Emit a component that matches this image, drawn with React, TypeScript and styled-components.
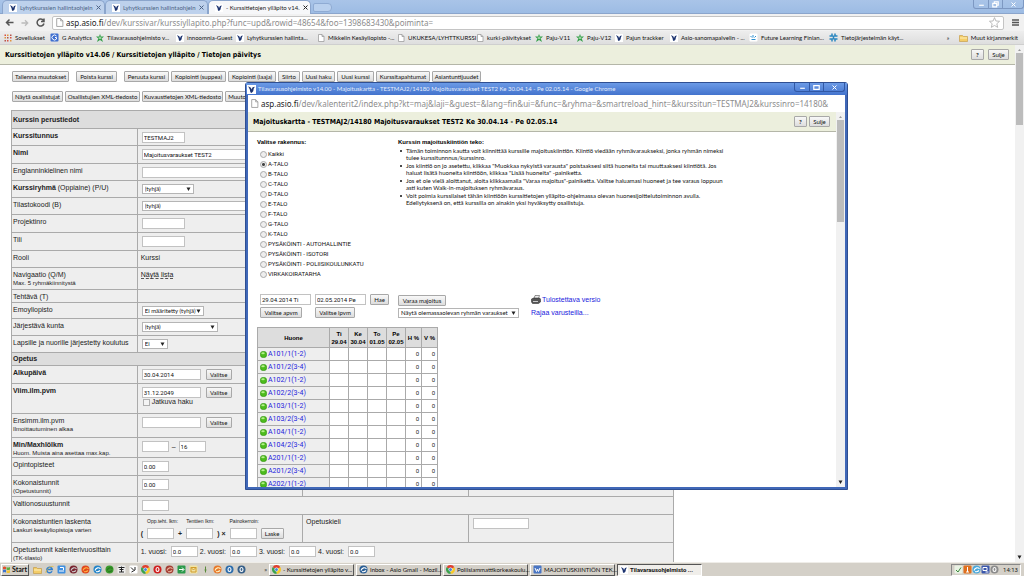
import React, { useId } from "react";
import styled, { createGlobalStyle, css } from "styled-components";

const narrow = `Roboto, "Liberation Sans", Arial, sans-serif`;
const compact = `Lato, "Liberation Sans", Arial, sans-serif`;
const sans = `"Liberation Sans", Arial, sans-serif`;
const title = `"DejaVu Sans Condensed", "DejaVu Sans", Verdana, sans-serif`;
const address = `"Noto Sans", Tahoma, sans-serif`;

const GlobalStyle = createGlobalStyle`
  *, *::before, *::after { box-sizing: border-box; }
  body { margin: 0; font: 7px/8px ${sans}; color: #222; background: #fff; }
  button, input, select { font: 6px/8px ${narrow}; color: #111; margin: 0; }
  svg { flex: none; }
`;

/* ---------- shell ---------- */

const Desktop = styled.div`
  position: relative;
  display: flex;
  flex-direction: column;
  height: 100vh;
  overflow: hidden;
`;

const TabStrip = styled.div`
  display: flex;
  flex: none;
  height: 14px;
  padding-left: 2px;
  background: linear-gradient(#a9c4e8, #9dbce4);
  border-bottom: 1px solid #8ba5cc;
`;

const Tab = styled.div<{ $active?: boolean }>`
  display: flex;
  align-items: center;
  gap: 3px;
  width: 103px;
  height: 14px;
  padding: 0 5px 0 6px;
  font: 6px/8px ${compact};
  color: ${(p) => (p.$active ? "#222" : "#4c6386")};
  background: ${(p) => (p.$active ? "#f6f7f9" : "#bdd1ec")};
  border: 1px solid #8ba5cc;
  border-bottom: 0;
  border-radius: 5px 5px 0 0;
`;

const TabTitle = styled.span`
  flex: 1;
  white-space: nowrap;
`;

const BareButton = styled.button`
  display: inline-flex;
  align-items: center;
  justify-content: center;
  flex: none;
  padding: 0;
  border: 0;
  background: none;
  color: inherit;
  &:disabled { color: #bbb; }
`;

const NewTab = styled(BareButton)`
  width: 19px;
  height: 9px;
  margin: 3px 0 0 2px;
  background: #b9d0ee;
  border: 1px solid #8fabd3;
  border-radius: 2px 4px 4px 2px;
`;

const WindowButtons = styled.div`
  display: flex;
  flex: none;
  height: 9px;
  margin-left: auto;
  border: 1px solid #7d98c2;
  border-top: 0;
  border-radius: 0 0 3px 3px;
  color: #fff;
`;

const WindowButton = styled(BareButton)<{ $wide?: boolean }>`
  width: ${(p) => (p.$wide ? 21 : 14)}px;
  & + & { border-left: 1px solid #7d98c2; }
`;

const Toolbar = styled.div`
  display: flex;
  align-items: center;
  flex: none;
  height: 17px;
  padding: 0 4px 0 5px;
  gap: 7px;
  background: #f1f1f1;
  color: #555;
`;

const AddressBox = styled.div`
  display: flex;
  align-items: center;
  gap: 2px;
  flex: 1;
  min-width: 0;
  height: 14px;
  padding: 0 3px 0 2px;
  background: #fff;
  border: 1px solid #c4c4c4;
  border-radius: 2px;
`;

const Address = styled.div`
  flex: 1;
  overflow: hidden;
  white-space: nowrap;
  font: 8px/12px ${address};
  color: #8c8c8c;
  b { font-weight: 400; color: #222; }
`;

const Bookmarks = styled.nav`
  display: flex;
  align-items: center;
  flex: none;
  height: 14px;
  padding: 0 6px 0 4px;
  background: linear-gradient(#ededed, #dedede);
  border-bottom: 1px solid #cfcfcf;
`;

const Bookmark = styled.a<{ $w?: number }>`
  display: flex;
  align-items: center;
  gap: 3px;
  flex: none;
  width: ${(p) => (p.$w ? `${p.$w}px` : "auto")};
  font: 6px/8px ${compact};
  white-space: nowrap;
  color: #111;
  text-decoration: none;
`;

const Spacer = styled.div`flex: 1;`;

const Viewport = styled.div`
  display: flex;
  flex: 1;
  min-height: 0;
`;

const Page = styled.main`
  flex: 1;
  min-width: 0;
  overflow: hidden;
`;

const PageHeader = styled.header<{ $popup?: boolean }>`
  display: flex;
  align-items: center;
  gap: ${(p) => (p.$popup ? 2 : 4)}px;
  height: 20px;
  padding: 0 6px 0 5px;
  background: #ecefdd;
  border-bottom: 1px solid #b4b6a8;
`;

const Title = styled.h1`
  flex: 1;
  margin: 0;
  font: bold 7px/10px ${title};
  white-space: nowrap;
  color: #000;
`;

const Button = styled.button<{ $w?: number }>`
  flex: none;
  width: ${(p) => (p.$w ? `${p.$w}px` : "auto")};
  height: 11px;
  padding: 0;
  font: 6px/9px ${compact};
  text-align: center;
  white-space: nowrap;
  background: linear-gradient(#f8f8f8, #dddddd);
  border: 1px solid #a8a8a8;
  border-radius: 1px;
`;

const Scrollbar = styled.div`
  display: flex;
  flex-direction: column;
  align-items: center;
  flex: none;
  width: 9px;
  padding: 3px 0;
  background: #f1f1f1;
  color: #444;
`;

const Thumb = styled.div<{ $h: number }>`
  width: 7px;
  height: ${(p) => p.$h}px;
  margin: 1px 0 auto;
  background: #bcbcbc;
`;

/* ---------- course form ---------- */

const Actions = styled.div`
  display: flex;
  gap: 2px;
  padding: 6px 0 9px 12px;
  & + & { padding: 0 0 8px 12px; }
`;

const Sep = styled.span`width: 3px;`;

const FormArea = styled.form`
  padding-left: 11px;
`;

const FormTable = styled.table`
  width: 66%;
  table-layout: fixed;
  border-collapse: collapse;
  background: #eee;
  th, td {
    padding: 3px 3px 0;
    border: 1px solid #aaa;
    text-align: left;
    vertical-align: top;
    font-weight: 400;
    white-space: nowrap;
  }
  th { padding-left: 1px; }
  td + th { padding-left: 3px; }
`;

const Row = styled.tr<{ $h: number; $head?: boolean }>`
  height: ${(p) => p.$h}px;
  ${(p) => p.$head && css`
    background: #ddd;
    && th { font-weight: 700; vertical-align: middle; padding-top: 0; }
  `}
`;

const Note = styled.div`
  font: 6px/8px ${sans};
`;

const Line = styled.div<{ $gap?: number; $pad?: number }>`
  display: flex;
  align-items: center;
  gap: ${(p) => p.$gap ?? 5}px;
  padding-left: ${(p) => p.$pad ?? 1}px;
`;

const TextInput = styled.input<{ $w: number }>`
  flex: none;
  width: ${(p) => p.$w}px;
  height: 11px;
  padding: 0 1px;
  background: #fff;
  border: 1px solid #c2c2c2;
  border-radius: 0;
`;

const SelectWrap = styled.span<{ $w: number }>`
  position: relative;
  display: block;
  flex: none;
  width: ${(p) => p.$w}px;
  height: 10px;
  select {
    display: block;
    width: 100%;
    height: 10px;
    padding: 0 2px;
    font-family: ${compact};
    appearance: none;
    background: #fff;
    border: 1px solid #b5b5b5;
    border-radius: 0;
  }
  svg { position: absolute; right: 3px; top: 3px; pointer-events: none; }
`;

const Small = styled.label`
  display: flex;
  flex-direction: column;
  gap: 3px;
  width: 27px;
  font: 5px/7px ${sans};
`;

const Calc = styled.div`
  display: flex;
  align-items: flex-end;
  gap: 4px;
  b { line-height: 10px; }
`;

const Tick = styled.input`
  appearance: none;
  width: 7px;
  height: 7px;
  background: #f4f4f4;
  border: 1px solid #b0b0b0;
`;

const DottedLink = styled.a`
  color: #222;
  text-decoration: none;
  border-bottom: 1px dashed #555;
`;

/* ---------- popup window ---------- */

const Popup = styled.section`
  position: absolute;
  left: 245px;
  top: 82px;
  display: flex;
  flex-direction: column;
  width: 603px;
  height: 408px;
  padding: 0 2px 2px;
  background: #4068b8;
  border: 1px solid #2f4f92;
  border-radius: 3px 3px 0 0;
`;

const PopupBar = styled.div`
  display: flex;
  align-items: center;
  gap: 2px;
  flex: none;
  height: 12px;
  margin: 0 -2px;
  padding: 0 2px 0 1px;
  font: 6px/8px ${compact};
  color: #e6eefc;
  white-space: nowrap;
  background: linear-gradient(#6b9ae6, #4373cd);
  ${WindowButtons} { align-self: flex-start; border-color: #3158a5; }
  ${WindowButton} { border-color: #3158a5; }
`;

const PopupAddress = styled.div`
  display: flex;
  align-items: center;
  gap: 2px;
  flex: none;
  height: 17px;
  padding: 0 2px;
  background: #fff;
`;

const PopupBody = styled.div`
  display: flex;
  flex: 1;
  min-height: 0;
  background: #fff;
`;

const Columns = styled.div`
  display: grid;
  grid-template-columns: 141px 1fr;
  padding: 6px 0 0 9px;
`;

const Heading = styled.h2`
  margin: 0 0 1px;
  font: bold 6px/8px ${sans};
  color: #000;
`;

const Radios = styled.fieldset`
  margin: 0;
  padding: 0;
  border: 0;
  font: 6px/10px ${narrow};
  color: #111;
  legend { padding: 0; margin-bottom: 3px; font: bold 6px/8px ${sans}; color: #000; }
  label { display: flex; align-items: center; gap: 1px; height: 10px; padding-left: 3px; white-space: nowrap; }
`;

const Radio = styled.input`
  appearance: none;
  width: 7px;
  height: 7px;
  background: #eee;
  border: 1px solid #a9a9a9;
  border-radius: 50%;
  &:checked { background: radial-gradient(#444 0 1px, #eee 2px); }
`;

const Help = styled.ul`
  margin: 0;
  padding: 0 0 0 8px;
  list-style: none;
  font: 6px/7px ${compact};
  color: #111;
  white-space: nowrap;
  li { position: relative; margin-bottom: 1px; }
  li::before {
    content: "";
    position: absolute;
    left: -6px;
    top: 3px;
    width: 2px;
    height: 2px;
    border-radius: 50%;
    background: #111;
  }
`;

const Filters = styled.div`
  display: flex;
  align-items: flex-end;
  padding: 15px 0 0 12px;
`;

const Stack = styled.div<{ $w: number }>`
  display: flex;
  flex-direction: column;
  align-items: flex-start;
  gap: 2px;
  flex: none;
  width: ${(p) => p.$w}px;
`;

const TopStack = styled(Stack)`
  align-self: flex-start;
`;

const LinkStack = styled(Stack)`
  align-self: flex-end;
  padding-left: 1px;
`;

const BlueLink = styled.a<{ $room?: boolean }>`
  display: flex;
  align-items: center;
  gap: 1px;
  height: 11px;
  font: 7px/11px ${(p) => (p.$room ? narrow : sans)};
  color: #2222dd;
  text-decoration: none;
  white-space: nowrap;
`;

const RoomTable = styled.table`
  margin: 9px 0 0 9px;
  width: 180px;
  table-layout: fixed;
  border-collapse: collapse;
  th, td { padding: 0; border: 1px solid #aaa; }
  thead th { height: 20px; background: #ddd; font: bold 6px/8px ${sans}; color: #000; }
  tbody tr { height: 13px; }
  tbody th { padding-left: 2px; background: #eee; font-weight: 400; }
  td { padding-right: 2px; text-align: right; font: 6px/8px ${narrow}; }
`;

/* ---------- taskbar ---------- */

const Taskbar = styled.footer`
  display: flex;
  align-items: center;
  gap: 2px;
  flex: none;
  height: 14px;
  padding: 0 3px 0 1px;
  background: #d4d0c8;
  border-top: 1px solid #efede8;
  font: 6px/8px ${narrow};
`;

const StartButton = styled.button`
  display: flex;
  align-items: center;
  gap: 1px;
  flex: none;
  width: 28px;
  height: 12px;
  padding: 0;
  font: bold 7px/9px ${compact};
  background: #d4d0c8;
  border: 1px solid;
  border-color: #fff #555 #555 #fff;
`;

const QuickLaunch = styled.div`
  display: flex;
  align-items: center;
  flex: none;
  gap: 3px;
  width: 236px;
  padding-left: 2px;
`;

const Task = styled.button<{ $active?: boolean }>`
  display: flex;
  align-items: center;
  gap: 2px;
  flex: none;
  width: 85px;
  height: 12px;
  padding: 0 2px;
  white-space: nowrap;
  font: ${(p) => (p.$active ? "bold " : "")}6px/9px ${(p) => (p.$active ? narrow : compact)};
  background: ${(p) => (p.$active ? "#f0eeea" : "#d4d0c8")};
  border: 1px solid;
  border-color: ${(p) => (p.$active ? "#555 #fff #fff #555" : "#fff #555 #555 #fff")};
`;

const Tray = styled.div`
  display: flex;
  align-items: center;
  height: 12px;
  margin-left: auto;
  padding: 0 2px;
  border: 1px solid;
  border-color: #888 #fff #fff #888;
  span { margin-left: 4px; }
`;

/* ---------- icons ---------- */

const Bird = ({ s = 8 }: { s?: number }) => (
  <svg width={s} height={s} viewBox="0 0 16 16">
    <rect width="16" height="16" fill="#fff" />
    <path d="M2 2l5 3 1 3 2-4 4-1-2 3-1 5-3 3-2-1-1-5z" fill="#1d3470" />
  </svg>
);

const PageIcon = ({ s = 8 }: { s?: number }) => (
  <svg width={s} height={s} viewBox="0 0 16 16" fill="#fff" stroke="#999" strokeWidth="1.5">
    <path d="M3 1h7l4 4v10H3zM10 1v4h4" />
  </svg>
);

const Cross = ({ s = 5 }: { s?: number }) => (
  <svg width={s} height={s} viewBox="0 0 10 10" stroke="currentColor" strokeWidth="2">
    <path d="M1 1l8 8M9 1L1 9" />
  </svg>
);

const Star = ({ color = "#36a04a" }: { color?: string }) => (
  <svg width="8" height="8" viewBox="0 0 16 16">
    <path d="M8 0l2 5h6l-4.500 4L14 16l-6-4-6 4 2.500-7L0 5h6z" fill={color} />
    <path d="M8 5v5M5 8h6" stroke="#d5efd8" strokeWidth="1.500" />
  </svg>
);

const OutlineStar = () => (
  <svg width="11" height="11" viewBox="0 0 18 18" fill="#fff" stroke="#aaa" strokeWidth="1.300">
    <path d="M9 1l2.300 5.500 6 .5-4.500 4 1.400 6L9 13.800 3.800 17l1.400-6-4.500-4 6-.5z" />
  </svg>
);

const Triangle = ({ up }: { up?: boolean }) => (
  <svg width="5" height="4" viewBox="0 0 10 8">
    <path d={up ? "M5 2l3 4H2z" : "M1 1h8L5 8z"} fill={up ? "#999" : "#222"} />
  </svg>
);

const Chrome = () => (
  <svg width="9" height="9" viewBox="0 0 18 18">
    <path d="M9 9L1.200 4.500A9 9 0 0 1 16.800 4.500z" fill="#e0402f" />
    <path d="M9 9l7.800-4.500A9 9 0 0 1 9 18z" fill="#f8c928" />
    <path d="M9 9v9A9 9 0 0 1 1.200 4.500z" fill="#3aa24c" />
    <circle cx="9" cy="9" r="4" fill="#fff" />
    <circle cx="9" cy="9" r="3" fill="#4a83d8" />
  </svg>
);

const Folder = () => (
  <svg width="9" height="8" viewBox="0 0 18 16">
    <path d="M1 3h6l2 2h8v10H1z" fill="#f4cd68" stroke="#b8892b" />
    <path d="M2 8h14" stroke="#fff0b8" strokeWidth="2" />
  </svg>
);

const Apps = () => (
  <svg width="8" height="8" viewBox="0 0 16 16">
    <path d="M1 1h3v3H1zM12 6h3v3h-3zM6 12h3v3H6z" fill="#d9503c" />
    <path d="M6 1h3v3H6zM1 6h3v3H1zM12 12h3v3h-3z" fill="#e0913a" />
    <path d="M12 1h3v3h-3zM6 6h3v3H6zM1 12h3v3H1z" fill="#b5534a" />
  </svg>
);

const Orb = ({ fill, ring = "#fff", mark }: { fill: string; ring?: string; mark?: string }) => (
  <svg width="9" height="9" viewBox="0 0 18 18">
    <circle cx="9" cy="9" r="8" fill={fill} />
    <path d={mark ?? "M4 11c2-6 8-7 11-3M6 13c3 1 6 0 8-2"} fill="none" stroke={ring} strokeWidth="2.200" />
  </svg>
);

const Tile = ({ fill, ink = "#fff", mark }: { fill: string; ink?: string; mark?: string }) => (
  <svg width="9" height="9" viewBox="0 0 18 18">
    <rect x="1" y="1" width="16" height="16" rx="2" fill={fill} />
    <path d={mark ?? "M4 6l3 7 2-5 2 5 3-7"} fill="none" stroke={ink} strokeWidth="2" />
  </svg>
);

const Puzzle = () => (
  <svg width="9" height="9" viewBox="0 0 18 18" fill="none" stroke="#2a86c0" strokeWidth="3">
    <path d="M6 1v5H1M12 1v5h5M6 17v-5H1M12 17v-5h5M9 5v8" />
  </svg>
);

const Explorer = () => (
  <svg width="9" height="9" viewBox="0 0 18 18" fill="none">
    <path d="M14 12.500A5.500 5.500 0 1 1 14.500 9H5" stroke="#2f7fd0" strokeWidth="3" />
    <path d="M2 16C0 12 10 1 17 3" stroke="#e3b93a" strokeWidth="1.500" />
  </svg>
);

const WindowsFlag = () => (
  <svg width="9" height="9" viewBox="0 0 18 18">
    <path d="M2 4q3-2 6 0v5q-3-2-6 0z" fill="#e2502e" />
    <path d="M9 4q3 2 7 0v5q-4 2-7 0z" fill="#5cae3e" />
    <path d="M2 10q3-2 6 0v5q-3-2-6 0z" fill="#3b72cf" />
    <path d="M9 10q3 2 7 0v5q-4 2-7 0z" fill="#f0c132" />
  </svg>
);

const Printer = () => (
  <svg width="10" height="9" viewBox="0 0 20 18">
    <path d="M6 7l2-6h9l-2 6z" fill="#eee" stroke="#333" />
    <path d="M1 8l4-2h12l2 2v6l-4 3H3l-2-3z" fill="#555" stroke="#222" />
    <path d="M4 13h10" stroke="#ccc" strokeWidth="2" />
  </svg>
);

const GreenBall = () => (
  <svg width="7" height="7" viewBox="0 0 14 14">
    <circle cx="7" cy="7" r="6.500" fill="#4dbb1d" stroke="#2f8a10" />
    <ellipse cx="6" cy="4.500" rx="3.500" ry="2.200" fill="#b3ef8a" />
  </svg>
);

const Glyph = ({ d, s = 9 }: { d: string; s?: number }) => (
  <svg width={s} height={s} viewBox="0 0 18 18" fill="none" stroke="currentColor" strokeWidth="3">
    <path d={d} />
  </svg>
);

const Controls = ({ maximise }: { maximise?: boolean }) => (
  <WindowButtons>
    <WindowButton aria-label="Pienennä"><Glyph s={7} d="M3 11h12" /></WindowButton>
    <WindowButton aria-label="Koko">
      <Glyph s={7} d={maximise ? "M2 4h14v10H2z" : "M2 6h10v9H2zM6 5V2h10v9h-3"} />
    </WindowButton>
    <WindowButton $wide aria-label="Sulje ikkuna"><Cross /></WindowButton>
  </WindowButtons>
);

/* ---------- form parts ---------- */

const Select = ({ w, value, id, label }: { w: number; value: string; id?: string; label?: string }) => (
  <SelectWrap $w={w}>
    <select id={id} aria-label={label}><option>{value}</option></select>
    <Triangle />
  </SelectWrap>
);

interface FieldProps {
  h: number;
  label: string;
  bold?: boolean;
  extra?: string;
  note?: string;
  span?: number;
  after?: React.ReactNode;
  children?: (id: string) => React.ReactNode;
}

const Field = ({ h, label, bold, extra, note, span = 3, after, children }: FieldProps) => {
  const id = useId();
  return (
    <Row $h={h}>
      <th scope="row">
        <label htmlFor={id}>{bold ? <b>{label}</b> : label}{extra}</label>
        {note && <Note>{note}</Note>}
      </th>
      <td colSpan={span}>{children?.(id)}</td>
      {after}
    </Row>
  );
};

const input = (w: number, value = "") => (id: string) => (
  <Line><TextInput id={id} $w={w} defaultValue={value} /></Line>
);

const dateInput = (value = "") => (id: string) => (
  <Line>
    <TextInput id={id} $w={59} defaultValue={value} />
    <Button type="button" $w={26}>Valitse</Button>
  </Line>
);

const CourseForm = () => (
  <FormTable>
    <colgroup>
      <col style={{ width: "19%" }} /><col style={{ width: "25%" }} />
      <col style={{ width: "25%" }} /><col style={{ width: "31%" }} />
    </colgroup>
    <tbody>
      <Row $h={18} $head><th colSpan={4}>Kurssin perustiedot</th></Row>
      <Field h={17} label="Kurssitunnus" bold>{input(43, "TESTMAJ2")}</Field>
      <Field h={18} label="Nimi" bold>{input(200, "Majoitusvaraukset TEST2")}</Field>
      <Field h={17} label="Englanninkielinen nimi">{input(200)}</Field>
      <Field h={17} label="Kurssiryhmä" bold extra=" (Oppiaine) (P/U)">
        {(id) => <Line><Select id={id} w={52} value="(tyhjä)" /></Line>}
      </Field>
      <Field h={17} label="Tilastokoodi (B)">
        {(id) => <Line><Select id={id} w={200} value="(tyhjä)" /></Line>}
      </Field>
      <Field h={18} label="Projektinro">{input(43)}</Field>
      <Field h={18} label="Tili">{input(43)}</Field>
      <Field h={17} label="Rooli">{(id) => <output id={id}>Kurssi</output>}</Field>
      <Field h={22} label="Navigaatio (Q/M)" note="Max. 5 ryhmäkiinnitystä">
        {() => <DottedLink href="#lista">Näytä lista</DottedLink>}
      </Field>
      <Field h={13} label="Tehtävä (T)" />
      <Field h={16} label="Emoyliopisto">
        {(id) => <Line><Select id={id} w={62} value="Ei määritetty (tyhjä)" /></Line>}
      </Field>
      <Field h={17} label="Järjestävä kunta">
        {(id) => <Line><Select id={id} w={76} value="(tyhjä)" /></Line>}
      </Field>
      <Field h={17} label="Lapsille ja nuorille järjestetty koulutus">
        {(id) => <Line><Select id={id} w={26} value="Ei" /></Line>}
      </Field>
      <Row $h={13} $head><th colSpan={4}>Opetus</th></Row>
      <Field h={18} label="Alkupäivä" bold>{dateInput("30.04.2014")}</Field>
      <Field h={30} label="Viim.ilm.pvm" bold>
        {(id) => (
          <>
            {dateInput("31.12.2049")(id)}
            <label><Line $gap={2} $pad={2}><Tick type="checkbox" />Jatkuva haku</Line></label>
          </>
        )}
      </Field>
      <Field h={24} label="Ensimm.ilm.pvm" note="Ilmoittautuminen alkaa">{dateInput()}</Field>
      <Field h={20} label="Min/Maxhlölkm" bold note="Huom. Muista aina asettaa max.kap.">
        {(id) => (
          <Line $gap={3}>
            <TextInput id={id} $w={27} /> –
            <TextInput aria-label="Maksimi" $w={27} defaultValue="16" />
          </Line>
        )}
      </Field>
      <Field h={18} label="Opintopisteet">{input(27, "0.00")}</Field>
      <Field h={21} span={1} label="Kokonaistunnit" note="(Opetustunnit)" after={<><td /><td /></>}>
        {input(27, "0.00")}
      </Field>
      <Field h={18} label="Valtionosuustunnit">{input(27)}</Field>
      <Field
        h={28}
        span={1}
        label="Kokonaistuntien laskenta"
        note="Laskuri kesäyliopistoja varten"
        after={
          <>
            <th scope="row"><label htmlFor="kieli">Opetuskieli</label></th>
            <td><Line><TextInput id="kieli" $w={56} /></Line></td>
          </>
        }
      >
        {(id) => (
          <Calc>
            <b>(</b>
            <Small>Opp.teht. lkm:<TextInput id={id} $w={27} /></Small>
            <b>+</b>
            <Small>Tenttien lkm:<TextInput $w={27} /></Small>
            <b>) ×</b>
            <Small>Painokerroin:<TextInput $w={27} /></Small>
            <Button type="button" $w={23}>Laske</Button>
          </Calc>
        )}
      </Field>
      <Field h={22} label="Opetustunnit kalenterivuosittain" note="(TK-tilasto)">
        {(id) => (
          <Line $gap={2} $pad={0}>
            {[1, 2, 3, 4].map((n) => (
              <label key={n}>
                <Line $gap={4} $pad={0}>{n}. vuosi: <TextInput id={n === 1 ? id : undefined} $w={27} defaultValue="0.0" /></Line>
              </label>
            ))}
          </Line>
        )}
      </Field>
    </tbody>
  </FormTable>
);

/* ---------- data ---------- */

const buildings = [
  "Kaikki", "A-TALO", "B-TALO", "C-TALO", "D-TALO", "E-TALO", "F-TALO", "G-TALO", "K-TALO",
  "PYSÄKÖINTI - AUTOHALLINTIE", "PYSÄKÖINTI - ISOTORI", "PYSÄKÖINTI - POLIISIKOULUNKATU", "VIRKAKOIRATARHA",
];

const rooms = [
  "A101/1(1-2)", "A101/2(3-4)", "A102/1(1-2)", "A102/2(3-4)", "A103/1(1-2)", "A103/2(3-4)",
  "A104/1(1-2)", "A104/2(3-4)", "A201/1(1-2)", "A201/2(3-4)", "A202/1(1-2)",
];

const days = [["Ti", "29.04"], ["Ke", "30.04"], ["To", "01.05"], ["Pe", "02.05"]];

const bookmarks: { text: string; w: number; icon: React.ReactNode }[] = [
  { text: "Sovellukset", w: 46, icon: <Apps /> },
  { text: "G Analytics", w: 46, icon: <Tile fill="#3f6fd0" mark="M13 6a5 5 0 1 0 0 6V9h-3" /> },
  { text: "Tilavarausohjelmisto v...", w: 80, icon: <Star /> },
  { text: "innoomnia-Guest", w: 60, icon: <Bird /> },
  { text: "Lyhytkurssien hallinta...", w: 81, icon: <Bird /> },
  { text: "Mikkelin Kesäyliopisto -...", w: 80, icon: <PageIcon /> },
  { text: "UKUKESA/LYHTTKURSSI", w: 79, icon: <PageIcon /> },
  { text: "kurki-päivitykset", w: 59, icon: <PageIcon /> },
  { text: "Paju-V11", w: 41, icon: <Star /> },
  { text: "Paju-V12", w: 39, icon: <Star /> },
  { text: "Pajun trackker", w: 55, icon: <Bird /> },
  { text: "Asio-sanomapalvelin - ...", w: 79, icon: <Bird /> },
  { text: "Future Learning Finlan...", w: 80, icon: <Tile fill="#fff" ink="#2a8fd0" mark="M3 6l3 3M8 4v5M14 6l-3 3M5 13h8" /> },
  { text: "Tietojärjestelmän käyt...", w: 80, icon: <Puzzle /> },
];

const quick = [
  <Folder />, <Explorer />, <Tile fill="#3f8fe0" mark="M4 12h10M6 5h7v5" />,
  <Orb fill="#7a2530" ring="#ccc" />, <Orb fill="#e0461e" ring="#ffb340" />, <Orb fill="#2385c9" />,
  <Orb fill="#3a9a2c" ring="#2c7a20" />, <Tile fill="#eee" ink="#222" mark="M3 5h12M5 9h8M4 14h10M9 3v11" />,
  <Tile fill="#fff" ink="#222" mark="M4 5l5 5M12 4v6l-7 4" />, <Chrome />,
  <Orb fill="#cf1f1f" mark="M9 5c-4 0-4 8 0 8s4-8 0-8" />, <Orb fill="#a33d33" ring="#e9b39b" />,
  <Tile fill="#2a9a4a" mark="M4 9h9M10 5l4 4-4 4" />, <Tile fill="#f1e3a3" ink="#d09b2c" mark="M4 5h10v9H4zM4 5l5 5 5-5" />,
  <Tile fill="#d4d0c8" ink="#5a8a3a" mark="M9 3v12M7 10h4" />, <Orb fill="#e8782a" ring="#fff2c0" />,
  <Orb fill="#2c6cab" mark="M9 5c-4 0-4 8 0 8s4-8 0-8" />, <Orb fill="#365f88" mark="M9 5c-4 0-4 8 0 8s4-8 0-8" />,
];

const BookingWindow = () => (
  <Popup>
    <PopupBar>
      <Bird s={9} />
      Tilavarausohjelmisto v14.00 - Majoituskartta - TESTMAJ2/14180 Majoitusvaraukset TEST2 Ke 30.04.14 - Pe 02.05.14 - Google Chrome
      <Controls maximise />
    </PopupBar>
    <PopupAddress>
      <PageIcon s={9} />
      <Address>
        <b>asp.asio.fi</b>/dev/kalenterit2/index.php?kt=maj&amp;laji=&amp;guest=&amp;lang=fin&amp;ui=&amp;func=&amp;ryhma=&amp;smartreload_hint=&amp;kurssitun=TESTMAJ2&amp;kurssinro=14180&amp;
      </Address>
    </PopupAddress>
    <PopupBody>
      <Page as="div">
        <PageHeader $popup>
          <Title as="h2">Majoituskartta - TESTMAJ2/14180 Majoitusvaraukset TEST2 Ke 30.04.14 - Pe 02.05.14</Title>
          <Button $w={13}><b>?</b></Button>
          <Button $w={21}>Sulje</Button>
        </PageHeader>
        <Columns>
          <Radios>
            <legend>Valitse rakennus:</legend>
            {buildings.map((b) => (
              <label key={b}><Radio type="radio" name="rakennus" defaultChecked={b === "A-TALO"} />{b}</label>
            ))}
          </Radios>
          <div>
            <Heading>Kurssin majoituskiintiön teko:</Heading>
            <Help>
              <li>Tämän toiminnon kautta voit kiinnittää kurssille majoituskiintiön. Kiintiö viedään ryhmävaraukseksi, jonka ryhmän nimeksi<br />tulee kurssitunnnus/kurssinro.</li>
              <li>Jos kiintiö on jo asetettu, klikkaa "Muokkaa nykyistä varausta" poistaaksesi siitä huoneita tai muuttaaksesi kiintiötä. Jos<br />haluat lisätä huoneita kiintiöön, klikkaa "Lisää huoneita" -painiketta.</li>
              <li>Jos et ole vielä aloittanut, aloita klikkaamalla "Varaa majoitus"-painiketta. Valitse haluamasi huoneet ja tee varaus loppuun<br />asti kuten Walk-in-majoituksen ryhmävaraus.</li>
              <li>Voit poimia kurssilaiset tähän kiintiöön kurssitietojen ylläpito-ohjelmassa olevan huonesijoittelutoiminnon avulla.<br />Edellytyksenä on, että kurssilla on ainakin yksi hyväksytty osallistuja.</li>
            </Help>
          </div>
        </Columns>
        <Filters>
          <Stack $w={55}>
            <TextInput aria-label="Alkupvm" $w={51} defaultValue="29.04.2014 Ti" />
            <Button $w={42}>Valitse apvm</Button>
          </Stack>
          <Stack $w={55}>
            <TextInput aria-label="Loppupvm" $w={51} defaultValue="02.05.2014 Pe" />
            <Button $w={40}>Valitse lpvm</Button>
          </Stack>
          <TopStack $w={28}><Button $w={19}>Hae</Button></TopStack>
          <Stack $w={132}>
            <Button $w={48}>Varaa majoitus</Button>
            <Select w={121} label="Varaukset" value="Näytä olemassaolevan ryhmän varaukset" />
          </Stack>
          <LinkStack $w={90}>
            <BlueLink href="#tulosta"><Printer />Tulostettava versio</BlueLink>
            <BlueLink href="#rajaa">Rajaa varusteilla...</BlueLink>
          </LinkStack>
        </Filters>
        <RoomTable>
          <colgroup>
            <col style={{ width: 72 }} />
            {days.map(([d]) => <col key={d} style={{ width: 19 }} />)}
            <col style={{ width: 16 }} /><col style={{ width: 16 }} />
          </colgroup>
          <thead>
            <tr>
              <th>Huone</th>
              {days.map(([d, n]) => <th key={d}>{d}<br />{n}</th>)}
              <th>H %</th><th>V %</th>
            </tr>
          </thead>
          <tbody>
            {rooms.map((r) => (
              <tr key={r}>
                <th scope="row"><BlueLink $room href={`#${r}`}><GreenBall />{r}</BlueLink></th>
                <td /><td /><td /><td /><td>0</td><td>0</td>
              </tr>
            ))}
          </tbody>
        </RoomTable>
      </Page>
      <Scrollbar><Triangle up /><Thumb $h={102} /><Triangle /></Scrollbar>
    </PopupBody>
  </Popup>
);

export default function App() {
  return (
    <Desktop>
      <GlobalStyle />
      <TabStrip>
        <Tab><Bird /><TabTitle>Lyhytkurssien hallintaohjeln</TabTitle><Cross /></Tab>
        <Tab><Bird /><TabTitle>Lyhytkurssien hallintaohjeln</TabTitle><Cross /></Tab>
        <Tab $active><Bird /><TabTitle>- Kurssitietojen ylläpito v14.</TabTitle><Cross /></Tab>
        <NewTab aria-label="Uusi välilehti" />
        <Controls />
      </TabStrip>
      <Toolbar>
        <BareButton aria-label="Takaisin"><Glyph d="M17 9H3M9 3L3 9l6 6" /></BareButton>
        <BareButton disabled aria-label="Eteenpäin"><Glyph s={8} d="M1 9h14M9 3l6 6-6 6" /></BareButton>
        <BareButton aria-label="Päivitä"><Glyph d="M15 5a7 7 0 1 0 1 6M16 1v6h-6" /></BareButton>
        <AddressBox>
          <PageIcon s={9} />
          <Address><b>asp.asio.fi</b>/dev/kurssivar/kurssiyllapito.php?func=upd&amp;rowid=48654&amp;foo=1398683430&amp;poiminta=</Address>
          <OutlineStar />
        </AddressBox>
        <BareButton aria-label="Valikko"><Glyph d="M2 4h14M2 9h14M2 14h14" /></BareButton>
      </Toolbar>
      <Bookmarks>
        {bookmarks.map((b) => (
          <Bookmark key={b.text} href="#" $w={b.w}>{b.icon}{b.text}</Bookmark>
        ))}
        <Spacer />
        <Bookmark href="#" $w={12}>»</Bookmark>
        <Bookmark href="#"><Folder />Muut kirjanmerkit</Bookmark>
      </Bookmarks>
      <Viewport>
        <Page>
          <PageHeader>
            <Title>Kurssitietojen ylläpito v14.06 / Kurssitietojen ylläpito / Tietojen päivitys</Title>
            <Button $w={13}><b>?</b></Button>
            <Button $w={21}>Sulje</Button>
          </PageHeader>
          <Actions>
            <Button $w={57}>Tallenna muutokset</Button><Sep />
            <Button $w={41}>Poista kurssi</Button><Sep />
            <Button $w={45}>Peruuta kurssi</Button>
            <Button $w={55}>Kopiointi (suppea)</Button>
            <Button $w={48}>Kopiointi (laaja)</Button>
            <Button $w={22}>Siirto</Button>
            <Button $w={33}>Uusi haku</Button>
            <Button $w={37}>Uusi kurssi</Button>
            <Button $w={54}>Kurssitapahtumat</Button>
            <Button $w={49}>Asiantuntijuudet</Button>
          </Actions>
          <Actions>
            <Button $w={51}>Näytä osallistujat</Button>
            <Button $w={75}>Osallistujien XML-tiedosto</Button>
            <Button $w={81}>Kuvaustietojen XML-tiedosto</Button>
            <Button $w={36}>Muutosloki</Button>
          </Actions>
          <FormArea><CourseForm /></FormArea>
        </Page>
        <Scrollbar><Triangle up /><Thumb $h={72} /><Triangle /></Scrollbar>
      </Viewport>
      <Taskbar>
        <StartButton><WindowsFlag />Start</StartButton>
        <QuickLaunch>
          {quick.map((q, i) => <React.Fragment key={i}>{q}</React.Fragment>)}
          <Spacer />»
        </QuickLaunch>
        <Task><Chrome />- Kurssitietojen ylläpito v...</Task>
        <Task><Orb fill="#2a5f96" />Inbox - Asio Gmail - Mozil...</Task>
        <Task><Chrome />Poliisiammattikorkeakoulu...</Task>
        <Task><Tile fill="#4a76c4" />MAJOITUSKIINTIÖN TEK...</Task>
        <Task $active><Bird />Tilavarausohjelmisto ...</Task>
        <Tray>
          <Tile fill="#e9f2e4" ink="#3c8a3c" mark="M4 10l4 4 6-9" />
          <Tile fill="#e0701f" mark="M9 4v10M6 14h6" />
          <Orb fill="#48a8dc" />
          <Tile fill="#3c58ac" mark="M4 5h8v6H4zM9 14h6" />
          <Orb fill="#8c8c8c" mark="M9 5c-4 0-4 8 0 8s4-8 0-8" />
          <span>14:13</span>
        </Tray>
      </Taskbar>
      <BookingWindow />
    </Desktop>
  );
}
